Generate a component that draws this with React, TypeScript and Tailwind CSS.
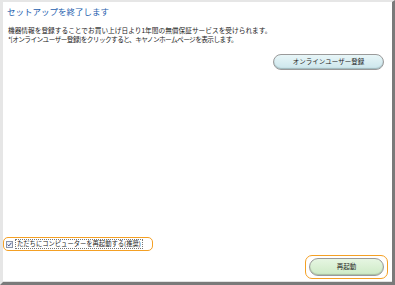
const jp = "font-['Noto_Sans_CJK_JP','Noto_Sans',sans-serif]";

const App = () => {
  return (
    <div className={`flex h-[285px] w-[395px] flex-col border-b-[3px] border-l-[3px] border-r-[3px] border-t-[2px] border-b-[#7a7a7a] border-l-[#e6e6e6] border-r-[#7a7a7a] border-t-[#e6e6e6] bg-white ${jp}`}>
      <div className="flex flex-1 flex-col shadow-[inset_0_-1px_0_#e2e2e2]">
        {/* タイトル */}
        <div className="pl-[4px] pt-[3px] text-[8.5px] leading-[12px] text-[#2460ae]">
          セットアップを終了します
        </div>

        <div className="mt-[9px] pl-[5px] text-[6.7px] leading-[8.5px] text-[#222]">
          <p>機器情報を登録することでお買い上げ日より1年間の無償保証サービスを受けられます。</p>
          <p className="tracking-[-0.6px]">*[オンラインユーザー登録]をクリックすると、キヤノンホームページを表示します。</p>
        </div>

        <div className="mr-[8px] mt-[11px] flex justify-end">
          <button className="flex h-[16px] w-[111px] items-center justify-center rounded-full border border-[#9a9a9a] bg-gradient-to-b from-[#e8f6f8] to-[#cce6ec] text-[6.5px] text-[#222] shadow-[inset_0_-1px_1px_#9fb8bd]">
            オンラインユーザー登録
          </button>
        </div>

        <div className="flex-1" />

        {/* チェックボックス */}
        <div className="flex">
          <label className="flex h-[14px] w-[150px] items-center gap-[2px] rounded-[5px] border-[1.5px] border-[#f4a024] pl-[2px] text-[6.3px] text-[#222]">
            <span className="flex h-[7px] w-[7px] items-center justify-center border border-[#8a94a8] bg-[#eef2f8]">
              <svg width="5" height="5" viewBox="0 0 5 5">
                <path d="M0.6 2.6 L1.9 3.9 L4.4 0.8" stroke="#3a4a8a" strokeWidth="1" fill="none" />
              </svg>
            </span>
            <span className="border border-dotted border-[#777] px-[1px] leading-[8px]">
              ただちにコンピューターを再起動する(推奨)
            </span>
          </label>
        </div>

        <div className="mb-[3px] mr-[4px] mt-[4px] flex justify-end">
          <div className="flex h-[24px] w-[83px] items-center justify-center rounded-[7px] border-[1.5px] border-[#f4a024]">
            <button className="flex h-[18px] w-[75px] items-center justify-center rounded-full border border-[#9a9a9a] bg-gradient-to-b from-[#e6f6e2] to-[#cdeac6] text-[6.5px] text-[#222] shadow-[inset_0_-1px_1px_#a8c0a2]">
              再起動
            </button>
          </div>
        </div>
      </div>
    </div>
  );
};

export default App;
